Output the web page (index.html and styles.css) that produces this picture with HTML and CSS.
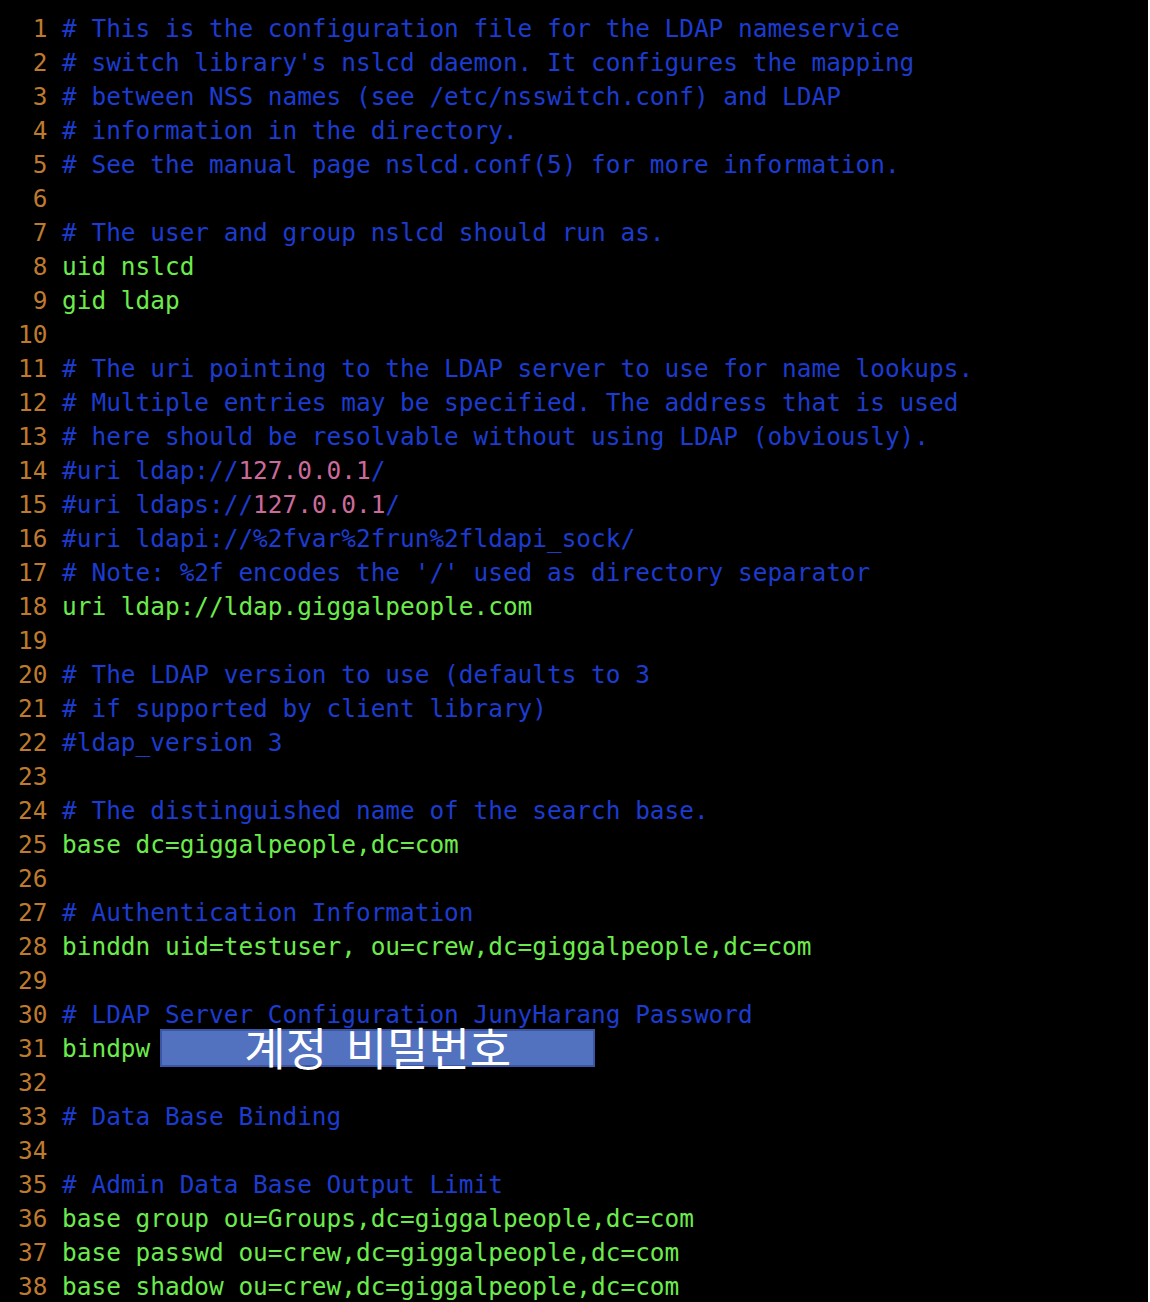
FILE: index.html
```html
<!DOCTYPE html>
<html lang="ko">
<head>
<meta charset="utf-8">
<title>nslcd.conf</title>
<link rel="stylesheet" href="styles.css">
</head>
<body>
<div class="screen">
  <div class="line"><span class="ln">1</span><span class="c"># This is the configuration file for the LDAP nameservice</span></div>
  <div class="line"><span class="ln">2</span><span class="c"># switch library's nslcd daemon. It configures the mapping</span></div>
  <div class="line"><span class="ln">3</span><span class="c"># between NSS names (see /etc/nsswitch.conf) and LDAP</span></div>
  <div class="line"><span class="ln">4</span><span class="c"># information in the directory.</span></div>
  <div class="line"><span class="ln">5</span><span class="c"># See the manual page nslcd.conf(5) for more information.</span></div>
  <div class="line"><span class="ln">6</span></div>
  <div class="line"><span class="ln">7</span><span class="c"># The user and group nslcd should run as.</span></div>
  <div class="line"><span class="ln">8</span><span class="g">uid nslcd</span></div>
  <div class="line"><span class="ln">9</span><span class="g">gid ldap</span></div>
  <div class="line"><span class="ln">10</span></div>
  <div class="line"><span class="ln">11</span><span class="c"># The uri pointing to the LDAP server to use for name lookups.</span></div>
  <div class="line"><span class="ln">12</span><span class="c"># Multiple entries may be specified. The address that is used</span></div>
  <div class="line"><span class="ln">13</span><span class="c"># here should be resolvable without using LDAP (obviously).</span></div>
  <div class="line"><span class="ln">14</span><span class="c">#uri ldap://<span class="p">127.0.0.1</span>/</span></div>
  <div class="line"><span class="ln">15</span><span class="c">#uri ldaps://<span class="p">127.0.0.1</span>/</span></div>
  <div class="line"><span class="ln">16</span><span class="c">#uri ldapi://%2fvar%2frun%2fldapi_sock/</span></div>
  <div class="line"><span class="ln">17</span><span class="c"># Note: %2f encodes the '/' used as directory separator</span></div>
  <div class="line"><span class="ln">18</span><span class="g">uri ldap://ldap.giggalpeople.com</span></div>
  <div class="line"><span class="ln">19</span></div>
  <div class="line"><span class="ln">20</span><span class="c"># The LDAP version to use (defaults to 3</span></div>
  <div class="line"><span class="ln">21</span><span class="c"># if supported by client library)</span></div>
  <div class="line"><span class="ln">22</span><span class="c">#ldap_version 3</span></div>
  <div class="line"><span class="ln">23</span></div>
  <div class="line"><span class="ln">24</span><span class="c"># The distinguished name of the search base.</span></div>
  <div class="line"><span class="ln">25</span><span class="g">base dc=giggalpeople,dc=com</span></div>
  <div class="line"><span class="ln">26</span></div>
  <div class="line"><span class="ln">27</span><span class="c"># Authentication Information</span></div>
  <div class="line"><span class="ln">28</span><span class="g">binddn uid=testuser, ou=crew,dc=giggalpeople,dc=com</span></div>
  <div class="line"><span class="ln">29</span></div>
  <div class="line"><span class="ln">30</span><span class="c"># LDAP Server Configuration JunyHarang Password</span></div>
  <div class="line"><span class="ln">31</span><span class="g">bindpw</span><span class="redact"><span class="redact-text">계정 비밀번호</span></span></div>
  <div class="line"><span class="ln">32</span></div>
  <div class="line"><span class="ln">33</span><span class="c"># Data Base Binding</span></div>
  <div class="line"><span class="ln">34</span></div>
  <div class="line"><span class="ln">35</span><span class="c"># Admin Data Base Output Limit</span></div>
  <div class="line"><span class="ln">36</span><span class="g">base group ou=Groups,dc=giggalpeople,dc=com</span></div>
  <div class="line"><span class="ln">37</span><span class="g">base passwd ou=crew,dc=giggalpeople,dc=com</span></div>
  <div class="line"><span class="ln">38</span><span class="g">base shadow ou=crew,dc=giggalpeople,dc=com</span></div>
</div>
</body>
</html>
```

FILE: styles.css
```css
html, body {
  margin: 0;
  padding: 0;
  background: #ffffff;
}

.screen {
  width: 1148px;
  height: 1302px;
  box-sizing: border-box;
  background: #000000;
  padding: 12px 0 0 18px;
  overflow: hidden;
  font-family: "DejaVu Sans Mono", "Liberation Mono", monospace;
  font-size: 24.42px;
}

.line {
  display: flex;
  align-items: flex-start;
  height: 34px;
  line-height: 34px;
  white-space: pre;
}

.ln {
  width: 29.4px;
  margin-right: 14.7px;
  text-align: right;
  color: #bf7a2e;
  flex: none;
}

.c {
  color: #1c3bcf;
}

.g {
  color: #6cec4c;
}

.p {
  color: #cc6a9c;
}

.redact {
  display: inline-flex;
  align-items: center;
  justify-content: center;
  box-sizing: border-box;
  width: 435px;
  height: 38px;
  margin-top: -3px;
  margin-left: 10px;
  background: #5272c0;
  border: 2px solid #3a56a4;
}

.redact-text {
  font-family: "Noto Sans CJK KR", "Noto Sans", sans-serif;
  font-size: 45px;
  line-height: 1;
  word-spacing: 6px;
  color: #ffffff;
  margin-top: -4px;
}
```
